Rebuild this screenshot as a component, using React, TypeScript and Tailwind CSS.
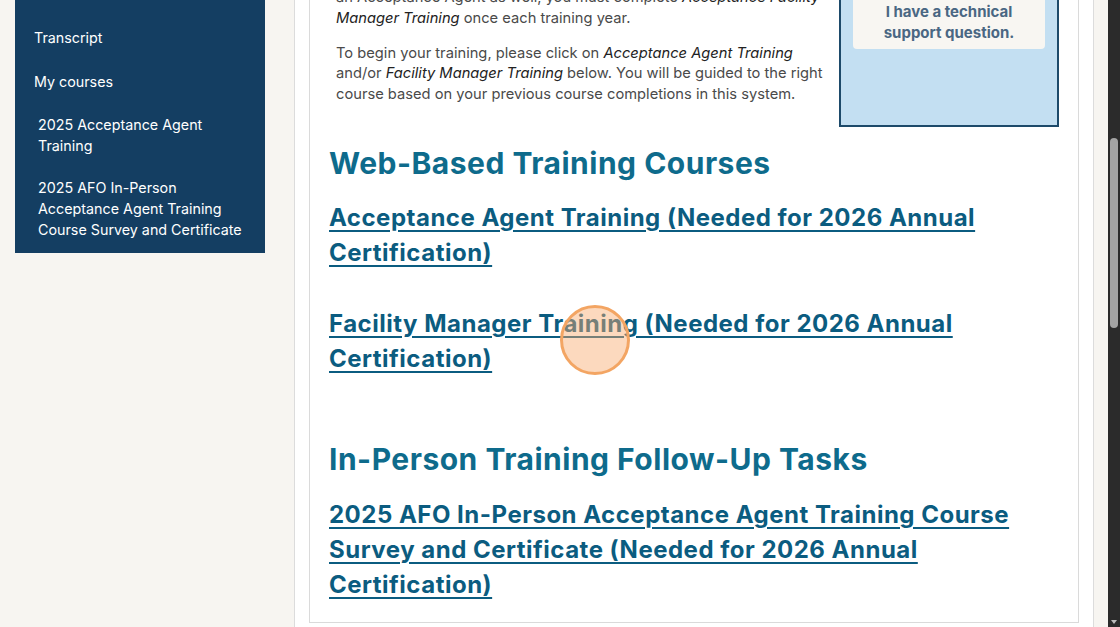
import React from "react";

const font = { fontFamily: "Inter, 'Noto Sans', sans-serif" };

function SideItem({ children, sub, py }: { children: React.ReactNode; sub?: boolean; py: string }) {
  return (
    <div className={`${py} leading-[21px] text-[14.3px] text-white ${sub ? "pl-[23px] pr-[10px]" : "pl-[19px]"}`}>
      {children}
    </div>
  );
}

const linkCls =
  "block text-[24px] font-bold tracking-[0.5px] leading-[35px] text-[#0b5c80] underline decoration-[2px] underline-offset-[4px]";
const headCls = "text-[30px] font-bold tracking-[0.5px] leading-[38px] text-[#0e6b8c]";

export default function App() {
  return (
    <div className="relative flex h-[627px] w-[1120px] overflow-hidden bg-[#f7f5f1]" style={font}>
      {/* left column */}
      <div className="w-[294px] shrink-0 px-[15px]">
        <div className="w-[250px] bg-[#143e62] pt-[15px] pb-[3px]">
          <SideItem py="py-[11.5px]">Transcript</SideItem>
          <SideItem py="py-[11.5px]">My courses</SideItem>
          <SideItem sub py="py-[10.5px]">
            2025 Acceptance Agent
            <br />
            Training
          </SideItem>
          <SideItem sub py="py-[10.5px]">
            2025 AFO In-Person
            <br />
            Acceptance Agent Training
            <br />
            Course Survey and Certificate
          </SideItem>
        </div>
      </div>

      {/* main panel */}
      <div className="w-[800px] shrink-0 border-x border-[#dcdcdc] bg-white pl-[14px] pr-[14px]">
        <div className="-mt-[34px] border border-[#dadada] bg-white px-[19px] pt-[20px] pb-[20px]">
          <div className="flex items-start">
            <div className="flex-1 pl-[7px] pr-[6px] text-[14.7px] leading-[20.5px] text-[#4a4a4a]">
              <p className="whitespace-nowrap">
                an Acceptance Agent as well, you must complete <i className="text-[#222]">Acceptance Facility</i>
                <br />
                <i className="text-[#222]">Manager Training</i> once each training year.
              </p>
              <p className="mt-[14.5px] whitespace-nowrap">
                To begin your training, please click on <i className="text-[#222]">Acceptance Agent Training</i>
                <br />
                and/or <i className="text-[#222]">Facility Manager Training</i> below. You will be guided to the right
                <br />
                course based on your previous course completions in this system.
              </p>
            </div>
            <div className="w-[220px] shrink-0 border-2 border-[#1d4a6a] bg-[#c3dff2] px-[12px] pt-[5px] pb-[76px]">
              <div className="rounded-[4px] bg-[#f8f6f2] py-[6.5px] text-center text-[15px] font-bold leading-[21px] text-[#4a6783]">
                I have a technical
                <br />
                support question.
              </div>
            </div>
          </div>

          <h2 className={`mt-[17px] ${headCls}`}>Web-Based Training Courses</h2>

          <a className={`mt-[17.5px] ${linkCls}`}>
            Acceptance Agent Training (Needed for 2026 Annual
            <br />
            Certification)
          </a>
          <a className={`mt-[36px] ${linkCls}`}>
            Facility Manager Training (Needed for 2026 Annual
            <br />
            Certification)
          </a>

          <h2 className={`mt-[64px] ${headCls}`}>In-Person Training Follow-Up Tasks</h2>

          <a className={`mt-[19px] ${linkCls}`}>
            2025 AFO In-Person Acceptance Agent Training Course
            <br />
            Survey and Certificate (Needed for 2026 Annual
            <br />
            Certification)
          </a>
        </div>
      </div>

      {/* cream strip */}
      <div className="w-[14px] shrink-0 bg-[#f7f5f1]" />

      {/* scrollbar */}
      <div className="relative w-[12px] shrink-0 bg-[#2b2b2b]">
        <div className="absolute left-[2px] top-[138px] h-[190px] w-[8px] rounded-full bg-[#a3a3a3]" />
        <div className="absolute bottom-[3px] left-[3px] h-0 w-0 border-x-[3px] border-t-[4px] border-x-transparent border-t-[#bdbdbd]" />
      </div>

      {/* click indicator */}
      <div className="pointer-events-none absolute left-[560px] top-[305px] h-[70px] w-[70px] rounded-full border-[3px] border-[#f3a563] bg-[rgba(248,170,110,0.45)]" />
    </div>
  );
}
